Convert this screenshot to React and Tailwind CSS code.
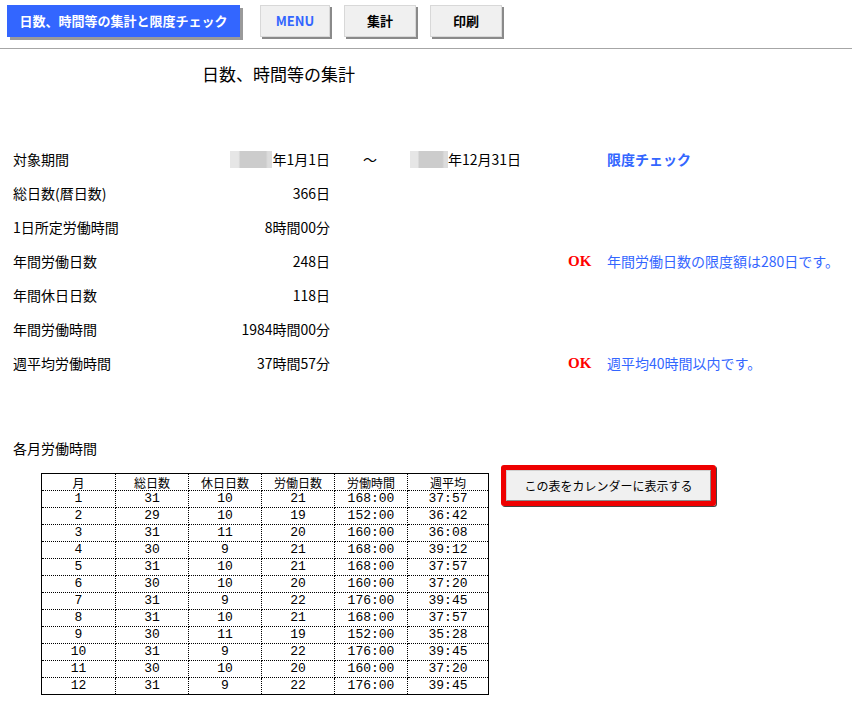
const months = [
  [1, 31, 10, 21, "168:00", "37:57"],
  [2, 29, 10, 19, "152:00", "36:42"],
  [3, 31, 11, 20, "160:00", "36:08"],
  [4, 30, 9, 21, "168:00", "39:12"],
  [5, 31, 10, 21, "168:00", "37:57"],
  [6, 30, 10, 20, "160:00", "37:20"],
  [7, 31, 9, 22, "176:00", "39:45"],
  [8, 31, 10, 21, "168:00", "37:57"],
  [9, 30, 11, 19, "152:00", "35:28"],
  [10, 31, 9, 22, "176:00", "39:45"],
  [11, 30, 10, 20, "160:00", "37:20"],
  [12, 31, 9, 22, "176:00", "39:45"],
];

const headers = ["月", "総日数", "休日日数", "労働日数", "労働時間", "週平均"];

const summary = [
  { label: "総日数(暦日数)", value: "366日" },
  { label: "1日所定労働時間", value: "8時間00分" },
  { label: "年間労働日数", value: "248日", ok: "年間労働日数の限度額は280日です。" },
  { label: "年間休日日数", value: "118日" },
  { label: "年間労働時間", value: "1984時間00分" },
  { label: "週平均労働時間", value: "37時間57分", ok: "週平均40時間以内です。" },
];

function Masked({ w }) {
  return (
    <span
      className={`inline-block h-[17px] bg-[linear-gradient(90deg,#e6e6e6_0%,#e6e6e6_20%,#cccccc_25%,#cccccc_85%,#dcdcdc_90%,#dcdcdc_100%)] ${w}`}
    />
  );
}

function ToolButton({ children, blue }) {
  return (
    <button
      className={`h-[32px] bg-[#f0f0f0] border border-[#d8d8d8] shadow-[2px_2px_0_#8a8a8a] text-[13px] font-bold ${
        blue ? "text-[#3366ff] w-[70px]" : "text-black w-[72px]"
      }`}
    >
      {children}
    </button>
  );
}

export default function App() {
  return (
    <div className="w-[852px] h-[706px] bg-white text-black font-['Noto_Sans_CJK_JP',sans-serif] overflow-hidden">
      <div className="h-[49px] border-b border-[#a6a6a6] flex items-start pt-[5px] pl-[7px]">
        <div className="w-[233px] h-[32px] bg-[#3366ff] shadow-[3px_3px_0_#9a9a9a] text-white font-bold text-[13px] flex items-center justify-center">
          日数、時間等の集計と限度チェック
        </div>
        <div className="ml-[20px] flex gap-[14px]">
          <ToolButton blue>MENU</ToolButton>
          <ToolButton>集計</ToolButton>
          <ToolButton>印刷</ToolButton>
        </div>
      </div>

      <div className="mt-[13px] h-[24px] leading-[24px] pl-[202px] text-[17px]">日数、時間等の集計</div>

      <div className="mt-[56px] text-[14px]">
        <div className="h-[34px] grid grid-cols-[215px_102px_80px_197px_1fr] items-center pl-[13px]">
          <span>対象期間</span>
          <span className="flex items-center justify-end">
            <Masked w="w-[42px]" />
            年1月1日
          </span>
          <span className="pl-[33px]">～</span>
          <span className="flex items-center">
            <Masked w="w-[38px]" />
            年12月31日
          </span>
          <span className="text-[#3366ff] font-bold">限度チェック</span>
        </div>
        {summary.map((row) => (
          <div
            key={row.label}
            className="h-[34px] grid grid-cols-[217px_100px_238px_39px_1fr] items-center pl-[13px]"
          >
            <span>{row.label}</span>
            <span className="text-right">{row.value}</span>
            <span />
            <span className="text-[#ff0000] font-bold font-['Liberation_Serif',serif] text-[15px]">
              {row.ok ? "OK" : ""}
            </span>
            <span className="text-[#3366ff]">{row.ok}</span>
          </div>
        ))}
      </div>

      <div className="mt-[58px] h-[20px] leading-[20px] pl-[13px] text-[14px]">各月労働時間</div>

      <div className="mt-[7px] flex items-start pl-[41px]">
        <table className="mt-[8px] table-fixed border-collapse border border-black font-['Liberation_Mono','Noto_Sans_CJK_JP',monospace] text-[13px] w-[447px]">
          <colgroup>
            <col className="w-[74px]" />
            <col className="w-[73px]" />
            <col className="w-[73px]" />
            <col className="w-[73px]" />
            <col className="w-[73px]" />
            <col className="w-[81px]" />
          </colgroup>
          <thead>
            <tr>
              {headers.map((h) => (
                <th
                  key={h}
                  className="h-[17px] p-0 leading-[15px] font-normal text-[12px] text-center border border-dotted border-black font-['Noto_Sans_CJK_JP',sans-serif]"
                >
                  {h}
                </th>
              ))}
            </tr>
          </thead>
          <tbody>
            {months.map((m) => (
              <tr key={m[0]}>
                {m.map((v, i) => (
                  <td
                    key={i}
                    className="h-[17px] p-0 leading-[16px] text-center border border-dotted border-black"
                  >
                    {v}
                  </td>
                ))}
              </tr>
            ))}
          </tbody>
        </table>

        <div className="ml-[12px] w-[215px] h-[41px] border-[5px] border-[#ee0000] rounded-[3px] shadow-[1px_1px_0_#444]">
          <button className="w-full h-full bg-[#f0f0f0] border border-[#d0d0d0] border-r-[#8a8a8a] border-b-[#8a8a8a] text-[12px] text-black">
            この表をカレンダーに表示する
          </button>
        </div>
      </div>
    </div>
  );
}
